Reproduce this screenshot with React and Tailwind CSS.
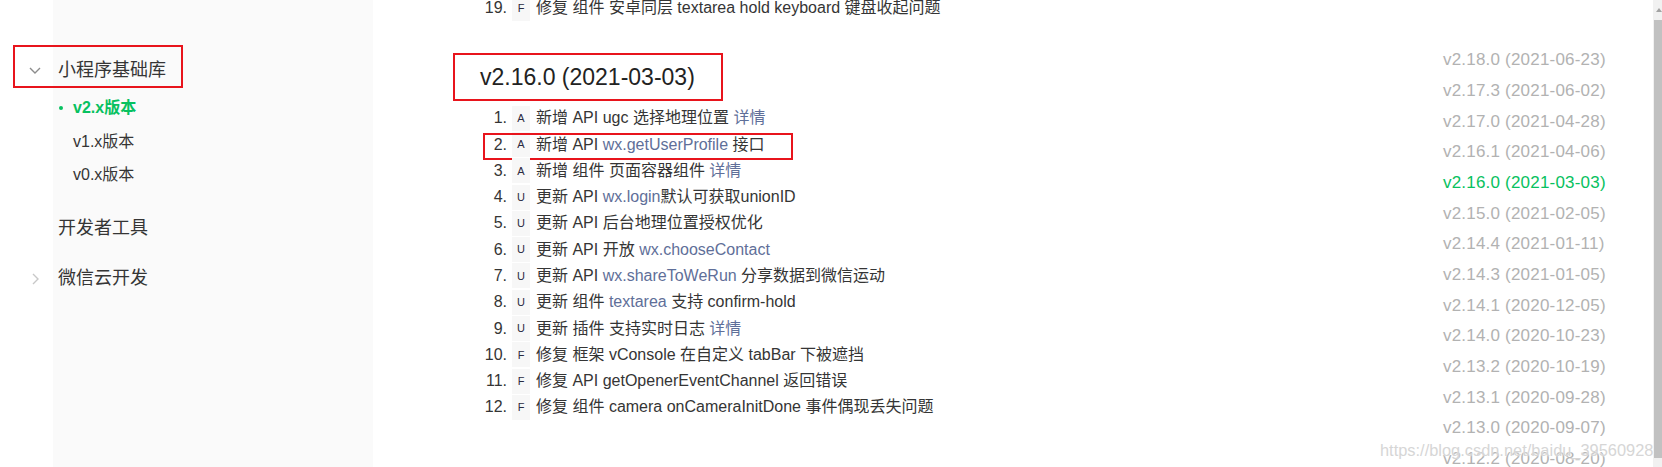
import React from "react";

const L = ({ children }) => <span className="text-[#5f6f99]">{children}</span>;

const items = [
  ["1.", "A", <>新增 API ugc 选择地理位置 <L>详情</L></>],
  ["2.", "A", <>新增 API <L>wx.getUserProfile</L> 接口</>],
  ["3.", "A", <>新增 组件 页面容器组件 <L>详情</L></>],
  ["4.", "U", <>更新 API <L>wx.login</L>默认可获取unionID</>],
  ["5.", "U", <>更新 API 后台地理位置授权优化</>],
  ["6.", "U", <>更新 API 开放 <L>wx.chooseContact</L></>],
  ["7.", "U", <>更新 API <L>wx.shareToWeRun</L> 分享数据到微信运动</>],
  ["8.", "U", <>更新 组件 <L>textarea</L> 支持 confirm-hold</>],
  ["9.", "U", <>更新 插件 支持实时日志 <L>详情</L></>],
  ["10.", "F", <>修复 框架 vConsole 在自定义 tabBar 下被遮挡</>],
  ["11.", "F", <>修复 API getOpenerEventChannel 返回错误</>],
  ["12.", "F", <>修复 组件 camera onCameraInitDone 事件偶现丢失问题</>],
];

const versions = [
  "v2.18.0 (2021-06-23)",
  "v2.17.3 (2021-06-02)",
  "v2.17.0 (2021-04-28)",
  "v2.16.1 (2021-04-06)",
  "v2.16.0 (2021-03-03)",
  "v2.15.0 (2021-02-05)",
  "v2.14.4 (2021-01-11)",
  "v2.14.3 (2021-01-05)",
  "v2.14.1 (2020-12-05)",
  "v2.14.0 (2020-10-23)",
  "v2.13.2 (2020-10-19)",
  "v2.13.1 (2020-09-28)",
  "v2.13.0 (2020-09-07)",
  "v2.12.2 (2020-08-20)",
];

function Row({ num, tag, children, boxed }) {
  return (
    <div className="relative flex h-[26.27px] items-center">
      <div className="w-[54px] text-right">{num}</div>
      <div className="ml-[5px] flex h-[25px] w-[18px] items-center justify-center bg-[#f7f7f7] text-[11px] text-[#2a2a40]">
        {tag}
      </div>
      <div className="ml-[6px] whitespace-nowrap">{children}</div>
      {boxed && (
        <div className="absolute left-[30px] top-[1.5px] h-[27px] w-[310px] border-2 border-[#e8141c]" />
      )}
    </div>
  );
}

export default function App() {
  return (
    <div className="relative flex h-[467px] w-[1662px] overflow-hidden bg-white font-['Liberation_Sans','Noto_Sans_CJK_SC',sans-serif] text-[#353535]">
      {/* Sidebar */}
      <div className="relative w-[373px] shrink-0 bg-[linear-gradient(to_right,#ffffff_53px,#fafafa_53px)] pt-[50px]">
        <div className="relative flex h-[40px] items-center">
          <svg className="ml-[29px] h-[7px] w-[12px]" viewBox="0 0 12 7">
            <polyline points="1,1 6,6 11,1" fill="none" stroke="#8c8c8c" strokeWidth="1.4" />
          </svg>
          <span className="ml-[17px] text-[18px]">小程序基础库</span>
          <div className="absolute left-[13px] top-[-5px] h-[43px] w-[170px] border-2 border-[#e8141c]" />
        </div>
        <div className="mt-[1.25px] flex flex-col text-[16px]">
          <div className="flex h-[33.5px] items-center font-bold text-[#07c160]">
            <span className="ml-[59px] h-[4px] w-[4px] rounded-full bg-[#07c160]" />
            <span className="ml-[10px]">v2.x版本</span>
          </div>
          <div className="flex h-[33.5px] items-center pl-[73px]">v1.x版本</div>
          <div className="flex h-[33.5px] items-center pl-[73px]">v0.x版本</div>
        </div>
        <div className="mt-[12px] flex h-[50px] items-center pl-[58px] text-[18px]">开发者工具</div>
        <div className="flex h-[50px] items-center text-[18px]">
          <svg className="ml-[32px] h-[12px] w-[7px]" viewBox="0 0 7 12">
            <polyline points="1,1 6,6 1,11" fill="none" stroke="#c8c8c8" strokeWidth="1.4" />
          </svg>
          <span className="ml-[19px]">微信云开发</span>
        </div>
      </div>

      {/* Main */}
      <div className="w-[1070px] shrink-0 pl-[80px] text-[16px]">
        <div className="mt-[-5px]">
          <Row num="19." tag="F">修复 组件 安卓同层 textarea hold keyboard 键盘收起问题</Row>
        </div>
        <div className="mt-[32px] flex h-[48px] w-[270px] items-center whitespace-nowrap border-2 border-[#e8141c] pl-[25px] text-[23px] text-[#222]">
          v2.16.0 (2021-03-03)
        </div>
        <div className="mt-[4px]">
          {items.map(([n, t, c], i) => (
            <Row key={n} num={n} tag={t} boxed={i === 1}>
              {c}
            </Row>
          ))}
        </div>
      </div>

      {/* Right version nav */}
      <div className="w-[210px] shrink-0 pt-[44.6px] text-[17px] tracking-[0.2px]">
        {versions.map((v) => (
          <div
            key={v}
            className={`flex h-[30.7px] items-center whitespace-nowrap ${
              v.startsWith("v2.16.0") ? "text-[#07c160]" : "text-[#b2b2b2]"
            }`}
          >
            {v}
          </div>
        ))}
      </div>

      {/* Scrollbar */}
      <div className="relative flex w-[9px] shrink-0 flex-col bg-[#f1f1f1]">
        <div className="flex h-[20px] items-center justify-center">
          <div className="ml-[3px] h-0 w-0 border-x-[3px] border-b-[4px] border-x-transparent border-b-[#a3a3a3]" />
        </div>
        <div className="ml-[1px] h-[438px] bg-[#c1c1c1]" />
      </div>

      {/* Watermark */}
      <div className="absolute left-[1380px] top-[438px] whitespace-nowrap text-[16.4px] text-[#d6d6d6] [text-shadow:0_0_2px_#fff]">
        https://blog.csdn.net/baidu_39560928
      </div>
    </div>
  );
}
